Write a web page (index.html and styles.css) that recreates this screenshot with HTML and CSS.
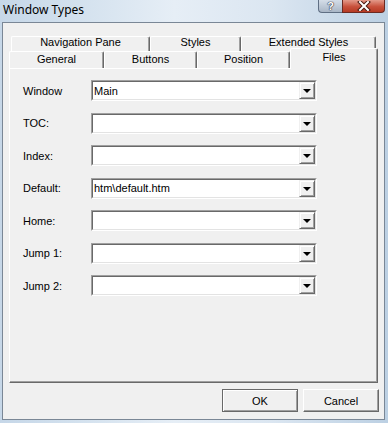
FILE: index.html
```html
<!DOCTYPE html>
<html>
<head>
    <title>Window Types</title>
    <link rel="stylesheet" href="styles.css">
</head>
<body>
    <div class="window">
        <div class="titlebar">
            <span class="title">Window Types</span>
            <div class="caption-buttons">
                <div class="cap-btn help">?</div>
                <div class="cap-btn close">
                    <svg width="14" height="10" viewBox="0 0 14 10">
                        <path d="M3 1 L11 9 M11 1 L3 9" stroke="#4a1b14" stroke-width="4" stroke-linecap="square"/>
                        <path d="M3 1 L11 9 M11 1 L3 9" stroke="#fff" stroke-width="2" stroke-linecap="square"/>
                    </svg>
                </div>
            </div>
        </div>

        <div class="client">
            <div class="tabs">
                <div class="tab-row back">
                    <div class="tab w-nav">Navigation Pane</div>
                    <div class="tab w-styles">Styles</div>
                    <div class="tab w-ext">Extended Styles</div>
                </div>
                <div class="tab-row front">
                    <div class="tab w-general">General</div>
                    <div class="tab w-buttons">Buttons</div>
                    <div class="tab w-position">Position</div>
                    <div class="tab w-files selected">Files</div>
                </div>
                <div class="panel">
                    <div class="form-grid">
                        <label>Window</label>
                        <div class="combo"><div class="combo-inner"><span class="value">Main</span><span class="drop"><i></i></span></div></div>

                        <label>TOC:</label>
                        <div class="combo"><div class="combo-inner"><span class="value"></span><span class="drop"><i></i></span></div></div>

                        <label>Index:</label>
                        <div class="combo"><div class="combo-inner"><span class="value"></span><span class="drop"><i></i></span></div></div>

                        <label>Default:</label>
                        <div class="combo"><div class="combo-inner"><span class="value">htm\default.htm</span><span class="drop"><i></i></span></div></div>

                        <label>Home:</label>
                        <div class="combo"><div class="combo-inner"><span class="value"></span><span class="drop"><i></i></span></div></div>

                        <label>Jump 1:</label>
                        <div class="combo"><div class="combo-inner"><span class="value"></span><span class="drop"><i></i></span></div></div>

                        <label>Jump 2:</label>
                        <div class="combo"><div class="combo-inner"><span class="value"></span><span class="drop"><i></i></span></div></div>
                    </div>
                </div>
            </div>

            <div class="footer">
                <button class="btn default">OK</button>
                <button class="btn">Cancel</button>
            </div>
        </div>
    </div>
</body>
</html>
```

FILE: styles.css
```css
body {
    margin: 0;
    padding: 0;
    font-family: "Liberation Sans", Arial, sans-serif;
    font-size: 11px;
    color: #000;
}

.window {
    width: 388px;
    height: 423px;
    display: flex;
    flex-direction: column;
    background: linear-gradient(90deg, #c6d7e8 0%, #d3e1ee 20%, #e6eef6 45%, #dbe6f1 70%, #bcd0e3 100%);
    overflow: hidden;
}

/* title bar */
.titlebar {
    height: 22px;
    display: flex;
    justify-content: space-between;
    align-items: flex-start;
    flex-shrink: 0;
}

.title {
    font-family: "Noto Sans", "Liberation Sans", sans-serif;
    font-size: 12px;
    line-height: 16px;
    padding: 2px 0 0 3px;
    color: #000;
}

.caption-buttons {
    display: flex;
    margin-right: 3px;
}

.cap-btn {
    height: 12px;
    display: flex;
    align-items: center;
    justify-content: center;
    border: 1px solid #5f6f84;
    border-top: none;
}

.help {
    width: 23px;
    border-right: none;
    border-radius: 0 0 0 4px;
    background: linear-gradient(#d4dde8, #a9b6c6);
    color: #fff;
    font-family: "Liberation Sans", sans-serif;
    font-weight: bold;
    font-size: 11px;
    text-shadow: 0 0 1px #334, 0 0 1px #334, 0 0 1px #334;
}

.close {
    width: 41px;
    border-color: #6b2a22;
    border-radius: 0 0 4px 0;
    background: linear-gradient(#e39a8a, #c8513c 55%, #b63a24);
}

/* client area */
.client {
    flex: 1;
    margin: 0 3px 3px 2px;
    border: 1px solid #7a8796;
    background: #f0f0f0;
    padding: 13px 6px 7px 6px;
    display: flex;
    flex-direction: column;
}

.tabs {
    flex: 1;
    display: flex;
    flex-direction: column;
}

.tab-row {
    display: flex;
}

.tab-row.back {
    padding-left: 2px;
    height: 15px;
}

.tab-row.front {
    height: 17px;
    align-items: flex-end;
}

.tab {
    box-sizing: border-box;
    background: #f0f0f0;
    border-top: 1px solid #fff;
    border-left: 1px solid #fff;
    border-right: 1px solid #696969;
    box-shadow: inset -1px 0 0 #a0a0a0;
    border-radius: 2px 2px 0 0;
    text-align: center;
    white-space: nowrap;
}

.back .tab {
    height: 17px;
    line-height: 11px;
}

.front .tab {
    height: 17px;
    line-height: 14px;
}

.w-nav { width: 139px; }
.w-styles { width: 91px; }
.w-ext { width: 135px; }
.w-general { width: 95px; }
.w-buttons { width: 93px; }
.w-position { width: 93px; }
.w-files { width: 88px; }

.front .tab.selected {
    height: 21px;
    margin-bottom: -1px;
    line-height: 16px;
    z-index: 2;
}

/* tab page */
.panel {
    flex: 1;
    border-top: 1px solid #fff;
    border-left: 1px solid #fff;
    border-right: 1px solid #696969;
    border-bottom: 1px solid #696969;
    box-shadow: inset -1px -1px 0 #a0a0a0;
    padding: 11px 0 0 13px;
}

.form-grid {
    display: grid;
    grid-template-columns: 68px 226px;
    row-gap: 11.5px;
    align-items: center;
}

.form-grid label {
    white-space: nowrap;
}

.combo {
    height: 21px;
    box-sizing: border-box;
    border: 1px solid;
    border-color: #a0a0a0 #fff #fff #a0a0a0;
}

.combo-inner {
    height: 100%;
    box-sizing: border-box;
    border: 1px solid;
    border-color: #696969 #e3e3e3 #e3e3e3 #696969;
    background: #fff;
    display: flex;
    align-items: center;
}

.combo .value {
    flex: 1;
    padding-left: 1px;
}

.drop {
    width: 16px;
    height: 17px;
    box-sizing: border-box;
    background: #f0f0f0;
    border: 1px solid;
    border-color: #f0f0f0 #696969 #696969 #f0f0f0;
    box-shadow: inset 1px 1px 0 #fff, inset -1px -1px 0 #a0a0a0;
    display: flex;
    align-items: center;
    justify-content: center;
}

.drop i {
    width: 0;
    height: 0;
    border-left: 4px solid transparent;
    border-right: 4px solid transparent;
    border-top: 4px solid #000;
    margin-top: 1px;
}

/* bottom buttons */
.footer {
    display: flex;
    justify-content: flex-end;
    gap: 5px;
    margin-top: 6px;
    margin-right: -1px;
}

.btn {
    width: 76px;
    height: 23px;
    box-sizing: border-box;
    font-family: "Liberation Sans", Arial, sans-serif;
    font-size: 11px;
    color: #000;
    background: #f0f0f0;
    border: 1px solid;
    border-color: #fff #696969 #696969 #fff;
    box-shadow: inset -1px -1px 0 #a0a0a0;
    padding: 0;
}

.btn.default {
    border: 1px solid #696969;
    box-shadow: inset 1px 1px 0 #fff, inset -1px -1px 0 #a0a0a0;
}
```
